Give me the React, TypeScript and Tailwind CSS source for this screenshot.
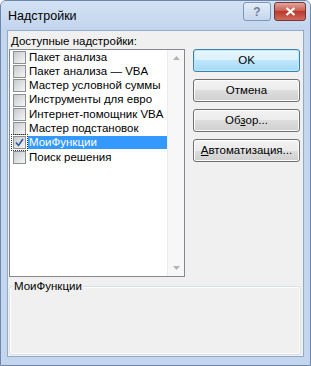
import React from "react";

const items = [
  "Пакет анализа",
  "Пакет анализа — VBA",
  "Мастер условной суммы",
  "Инструменты для евро",
  "Интернет-помощник VBA",
  "Мастер подстановок",
  "МоиФункции",
  "Поиск решения",
];

function Checkbox({ checked, focus }: { checked?: boolean; focus?: boolean }) {
  return (
    <div className={"relative w-[15px] h-[15px] flex items-center justify-center " + (focus ? "outline outline-1 outline-dotted outline-[#333]" : "")}>
      <div className="w-[13px] h-[13px] border border-[#8e8f8f] bg-white flex items-center justify-center">
        <div className="w-[11px] h-[11px] bg-gradient-to-br from-[#c6cad0] to-[#f6f6f6] flex items-center justify-center">
          {checked && (
            <svg width="9" height="9" viewBox="0 0 9 9">
              <path d="M1 4.5 L3.5 7.5 L8 1" fill="none" stroke="#3a5a9a" strokeWidth="1.6" />
            </svg>
          )}
        </div>
      </div>
    </div>
  );
}

function Btn({ children, def }: { children: React.ReactNode; def?: boolean }) {
  return (
    <div
      className={
        "w-[107px] h-[23px] rounded-[3px] border flex items-center justify-center text-[11.5px] text-black " +
        (def
          ? "border-[#3c7fb1] bg-[linear-gradient(#eaf6fd_0%,#d9f0fc_50%,#bee6fd_50%,#a7d9f5_100%)] shadow-[inset_0_0_0_1px_#b9ecf7]"
          : "border-[#707070] bg-[linear-gradient(#f2f2f2_0%,#ebebeb_50%,#dddddd_50%,#cfcfcf_100%)] shadow-[inset_0_0_0_1px_#fcfcfc]")
      }
    >
      {children}
    </div>
  );
}

export default function App() {
  return (
    <div
      className="w-[311px] h-[366px] flex flex-col bg-[#c4d6ee] border border-[#6d87ac] rounded-t-[6px] overflow-hidden"
      style={{ fontFamily: '"Liberation Sans", "DejaVu Sans", sans-serif' }}
    >
      <div className="h-[29px] flex items-center pl-[7px] pr-[4px] bg-[linear-gradient(#d3e1f4,#c2d5ee)]">
        <div className="text-[12.5px] text-black flex-1 mt-[1px]">Надстройки</div>
        <div className="flex gap-[3px] mt-[-8px]">
          <div className="w-[28px] h-[19px] rounded-[3px] border border-[#7d97ba] bg-[linear-gradient(#e3ecf8,#c6d6ec)] flex items-center justify-center text-[12px] font-bold text-[#6f7f96]">
            ?
          </div>
          <div className="w-[32px] h-[19px] rounded-[3px] border border-[#6f3a36] bg-[linear-gradient(#e3a59b,#c8574c_50%,#b93a2f_50%,#d16a5c)] flex items-center justify-center">
            <svg width="11" height="9" viewBox="0 0 11 9">
              <path d="M1.5 1 L9.5 8 M9.5 1 L1.5 8" stroke="#fff" strokeWidth="2.2" />
            </svg>
          </div>
        </div>
      </div>
      <div className="mx-[6px] flex-1 mb-[8px] bg-[#f0f0f0] border border-[#92a9c8] flex flex-col">
        <div className="flex pt-[2px]">
          <div className="flex flex-col ml-[1px]">
            <div className="text-[11.5px] leading-[16px] pl-[2px] text-black">
              <span className="underline">Д</span>оступные надстройки:
            </div>
            <div className="w-[176px] h-[228px] border border-[#828790] bg-white flex">
              <div className="flex-1 flex flex-col">
                {items.map((t, i) => (
                  <div key={t} className="h-[14.3px] flex items-center pl-[2px]">
                    <Checkbox checked={i === 6} focus={i === 6} />
                    <div
                      className={
                        "ml-[1px] flex-1 h-[13px] flex items-center pl-[1px] text-[11.5px] " +
                        (i === 6 ? "bg-[#3399ff] text-white" : "text-black")
                      }
                    >
                      {t}
                    </div>
                  </div>
                ))}
              </div>
              <div className="w-[17px] bg-[#f7f7f7] border-l border-[#ececec] flex flex-col justify-between items-center py-[6px]">
                <svg width="7" height="4" viewBox="0 0 7 4">
                  <path d="M0 4 L3.5 0 L7 4 Z" fill="#b4b4b4" />
                </svg>
                <svg width="7" height="4" viewBox="0 0 7 4">
                  <path d="M0 0 L3.5 4 L7 0 Z" fill="#b4b4b4" />
                </svg>
              </div>
            </div>
          </div>
          <div className="ml-[8px] mt-[16px] flex flex-col gap-[7px]">
            <Btn def>OK</Btn>
            <Btn>Отмена</Btn>
            <Btn>
              <span>
                Об<span className="underline">з</span>ор...
              </span>
            </Btn>
            <Btn>
              <span>
                <span className="underline">А</span>втоматизация...
              </span>
            </Btn>
          </div>
        </div>
        <div className="relative mt-[9px] ml-[1px] w-[292px] h-[69px] border border-[#d5dfe5] rounded-[3px] shadow-[inset_0_0_0_1px_#ffffff]">
          <div className="absolute left-[3px] top-[-8px] px-[1px] bg-[#f0f0f0] text-[11.5px] leading-[14px] text-black">
            МоиФункции
          </div>
        </div>
      </div>
    </div>
  );
}
